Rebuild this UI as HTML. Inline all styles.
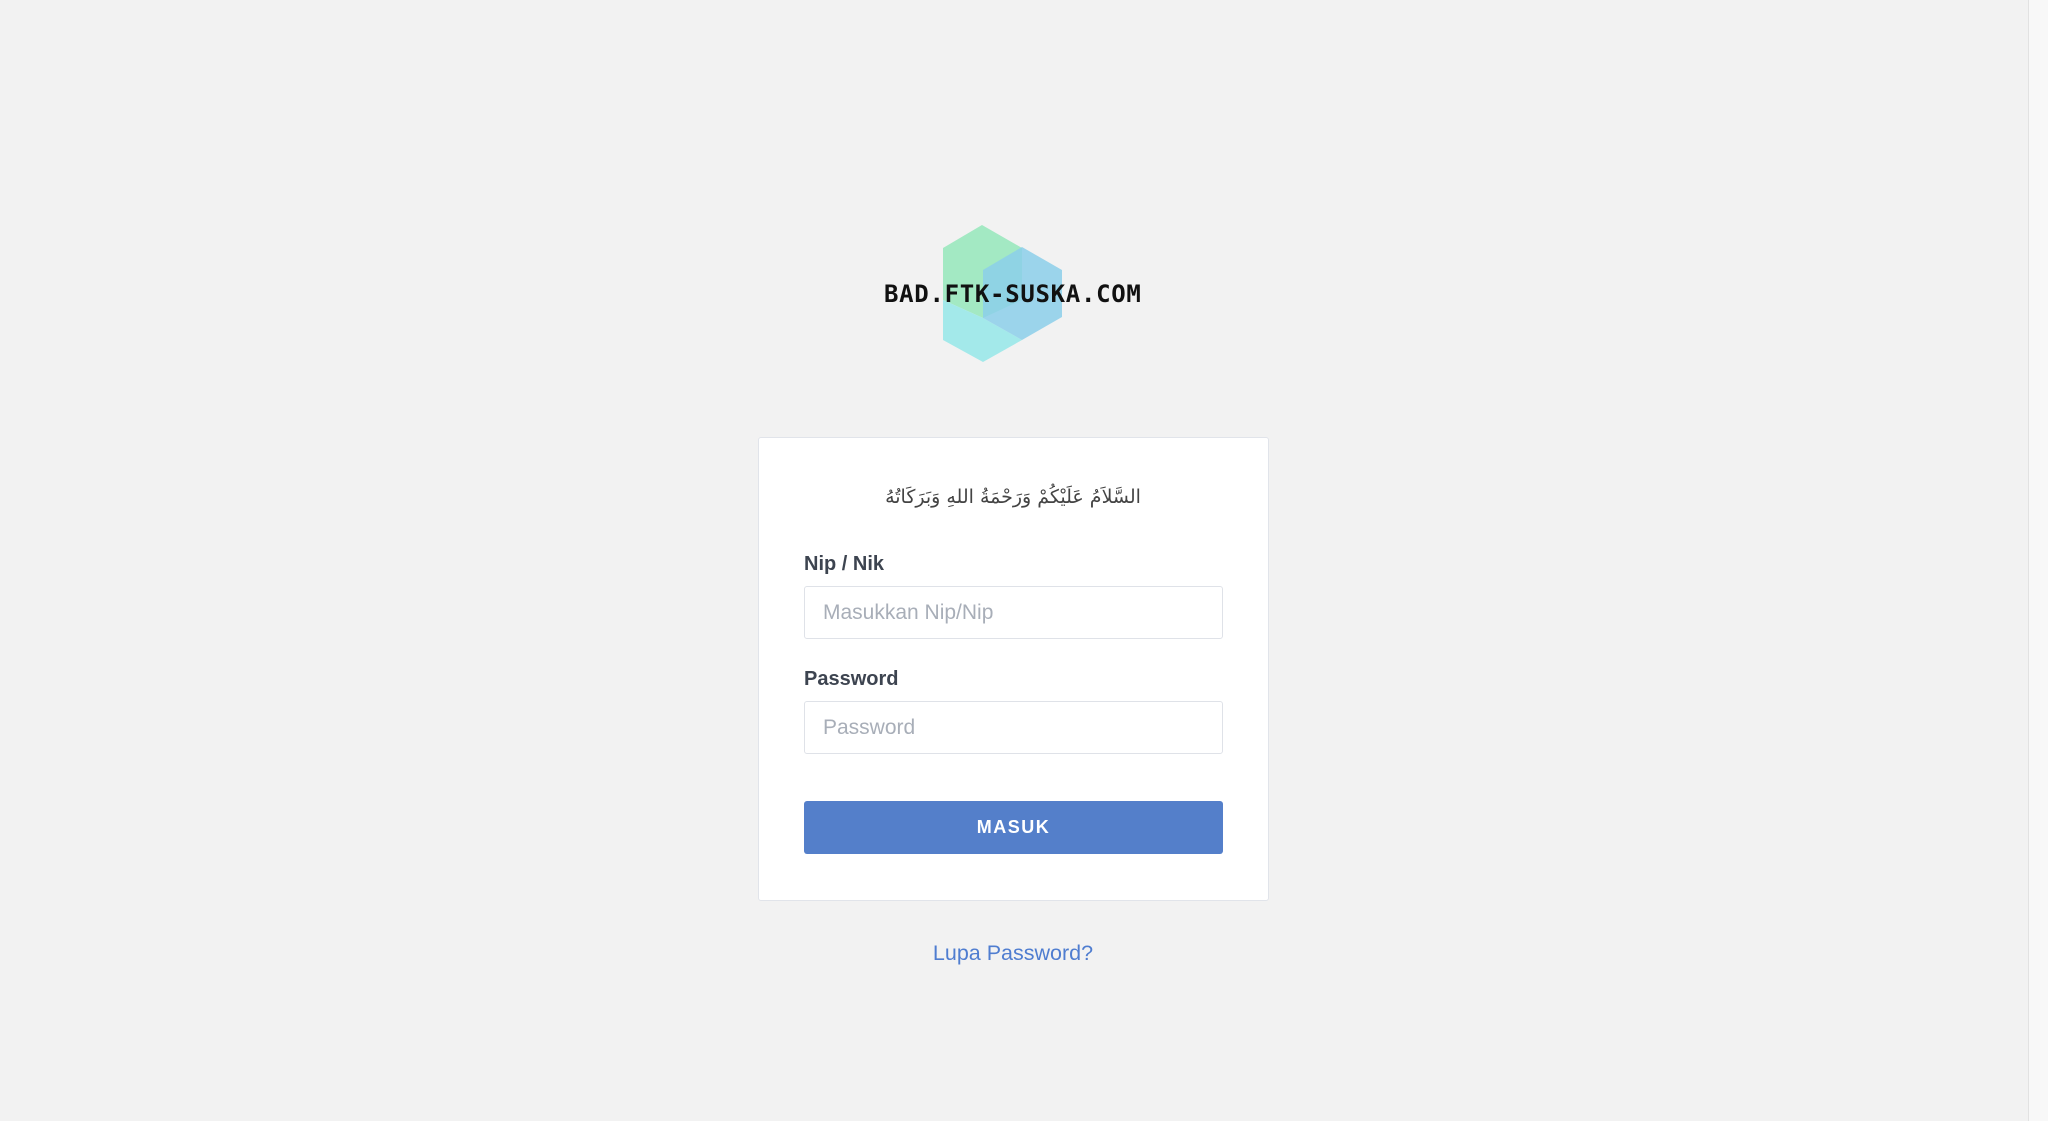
<!DOCTYPE html>
<html><head><meta charset="utf-8">
<style>
html,body{margin:0;padding:0;}
body{width:2048px;height:1121px;background:#f2f2f2;position:relative;overflow:hidden;font-family:"Liberation Sans",sans-serif;}
.sb{position:absolute;left:2028px;top:0;width:20px;height:1121px;background:#f8f8f8;border-left:1px solid #e2e2e2;}
.card{position:absolute;left:758px;top:437px;width:511px;height:464px;background:#fff;border:1px solid #e1e4ea;border-radius:3px;box-sizing:border-box;}
.ar{position:absolute;left:0;width:2026px;top:486px;text-align:center;font-family:"DejaVu Sans",sans-serif;font-size:19px;color:#444;direction:rtl;}
.lbl{position:absolute;left:804px;font-size:20px;font-weight:bold;color:#3d4450;}
.inp{position:absolute;left:804px;width:419px;height:53px;border:1px solid #dfe2e8;border-radius:3px;box-sizing:border-box;background:#fff;font-size:21px;color:#a8aeb8;line-height:51px;padding-left:18px;}
.btn{position:absolute;left:804px;top:801px;width:419px;height:53px;background:#547fca;border-radius:3px;color:#fff;font-size:18px;font-weight:bold;letter-spacing:1.5px;text-align:center;line-height:53px;}
.lupa{position:absolute;left:0;width:2026px;text-align:center;top:941px;font-size:21.5px;color:#4f7dd0;}
.logo{position:absolute;left:0;top:0;}
.lt{position:absolute;left:884px;top:280px;font-family:"DejaVu Sans Mono","Liberation Mono",monospace;font-weight:bold;font-size:24px;color:#111;letter-spacing:0.7px;}
</style></head><body>
<svg class="logo" width="2048" height="400">
<polygon points="982,225 1022,248 1022,300 983,318 943,300 943,248" fill="#9ee8c0" opacity="0.95"/>
<polygon points="943,300 983,318 1022,340 983,362 943,340" fill="#a3e9ea"/>
<polygon points="1022,247 1062,270 1062,317 1022,340 983,318 983,270" fill="#8ccfea" opacity="0.85"/>
</svg>
<div class="lt">BAD.FTK-SUSKA.COM</div>
<div class="card"></div>
<div class="ar">السَّلاَمُ عَلَيْكُمْ وَرَحْمَةُ اللهِ وَبَرَكَاتُهُ</div>
<div class="lbl" style="top:553px">Nip / Nik</div>
<div class="inp" style="top:586px">Masukkan Nip/Nip</div>
<div class="lbl" style="top:668px">Password</div>
<div class="inp" style="top:701px">Password</div>
<div class="btn">MASUK</div>
<div class="lupa">Lupa Password?</div>
<div class="sb"></div>
</body></html>
